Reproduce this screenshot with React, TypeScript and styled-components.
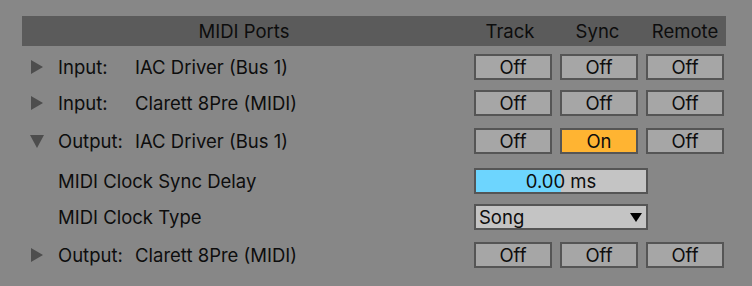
import React from "react";
import styled, { createGlobalStyle } from "styled-components";

const GlobalStyle = createGlobalStyle`
  body {
    margin: 0;
    background: #878787;
    font-family: Inter, "Noto Sans", sans-serif;
    color: #0d0d0d;
  }
`;

const COLUMNS = "444px 78px 78px 78px";

const Panel = styled.div`
  padding: 16px 0 0 22px;
  font-size: 18.5px;
`;

const Header = styled.div`
  display: grid;
  grid-template-columns: ${COLUMNS};
  column-gap: 8px;
  align-items: center;
  width: 704px;
  height: 30px;
  background: #5b5b5b;
`;

const HeaderCell = styled.div<{ $shift?: number }>`
  text-align: center;
  line-height: 30px;
  margin-left: ${(p) => p.$shift ?? 0}px;
`;

const Row = styled.div<{ $top: number }>`
  display: grid;
  grid-template-columns: ${COLUMNS};
  column-gap: 8px;
  align-items: center;
  width: 702px;
  height: 26px;
  margin-top: ${(p) => p.$top}px;
`;

const NameCell = styled.div`
  display: flex;
  align-items: center;
  height: 26px;
  white-space: nowrap;
`;

const ArrowBox = styled.span`
  display: flex;
  align-items: center;
  justify-content: center;
  width: 14px;
  margin-left: 8px;
  margin-right: 14px;
`;

const PortType = styled.span`
  width: 77px;
`;

const Param = styled.span`
  margin-left: 36px;
`;

const Toggle = styled.button<{ $on?: boolean }>`
  box-sizing: border-box;
  width: 78px;
  height: 26px;
  padding: 0;
  border: 2px solid #555;
  background: ${(p) => (p.$on ? "#ffb432" : "#a6a6a6")};
  font: inherit;
  color: #0d0d0d;
  line-height: 22px;
  text-align: center;
`;

const DelayField = styled.div<{ $fill: number }>`
  grid-column: 2 / span 3;
  box-sizing: border-box;
  width: 174px;
  height: 26px;
  border: 2px solid #555;
  background: linear-gradient(
    to right,
    #6dd5fe 0,
    #6dd5fe ${(p) => p.$fill}%,
    #c4c4c4 ${(p) => p.$fill}%
  );
  line-height: 22px;
  text-align: center;
`;

const Select = styled.div`
  grid-column: 2 / span 3;
  box-sizing: border-box;
  display: flex;
  align-items: center;
  justify-content: space-between;
  width: 174px;
  height: 26px;
  padding: 0 4px 0 3px;
  border: 2px solid #555;
  background: #c4c4c4;
`;

const Arrow = ({ open }: { open?: boolean }) =>
  open ? (
    <svg width="14" height="13" viewBox="0 0 14 13">
      <polygon points="0,0 14,0 7,13" fill="#4d4d4d" />
    </svg>
  ) : (
    <svg width="12" height="14" viewBox="0 0 12 14">
      <polygon points="0,0 12,7 0,14" fill="#4d4d4d" />
    </svg>
  );

const Toggles = ({ sync }: { sync?: boolean }) => (
  <>
    <Toggle>Off</Toggle>
    <Toggle $on={sync}>{sync ? "On" : "Off"}</Toggle>
    <Toggle>Off</Toggle>
  </>
);

const App = () => (
  <>
    <GlobalStyle />
    <Panel>
      <Header>
        <HeaderCell>MIDI Ports</HeaderCell>
        <HeaderCell $shift={-6}>Track</HeaderCell>
        <HeaderCell $shift={-3}>Sync</HeaderCell>
        <HeaderCell>Remote</HeaderCell>
      </Header>

      <Row $top={8}>
        <NameCell>
          <ArrowBox><Arrow /></ArrowBox>
          <PortType>Input:</PortType>IAC Driver (Bus 1)
        </NameCell>
        <Toggles />
      </Row>
      <Row $top={10}>
        <NameCell>
          <ArrowBox><Arrow /></ArrowBox>
          <PortType>Input:</PortType>Clarett 8Pre (MIDI)
        </NameCell>
        <Toggles />
      </Row>
      <Row $top={12}>
        <NameCell>
          <ArrowBox><Arrow open /></ArrowBox>
          <PortType>Output:</PortType>IAC Driver (Bus 1)
        </NameCell>
        <Toggles sync />
      </Row>
      <Row $top={14}>
        <NameCell>
          <Param>MIDI Clock Sync Delay</Param>
        </NameCell>
        <DelayField $fill={50}>0.00 ms</DelayField>
      </Row>
      <Row $top={10}>
        <NameCell>
          <Param>MIDI Clock Type</Param>
        </NameCell>
        <Select>
          Song
          <svg width="12" height="9" viewBox="0 0 12 9">
            <polygon points="0,0 12,0 6,9" fill="#000" />
          </svg>
        </Select>
      </Row>
      <Row $top={12}>
        <NameCell>
          <ArrowBox><Arrow /></ArrowBox>
          <PortType>Output:</PortType>Clarett 8Pre (MIDI)
        </NameCell>
        <Toggles />
      </Row>
    </Panel>
  </>
);

export default App;
